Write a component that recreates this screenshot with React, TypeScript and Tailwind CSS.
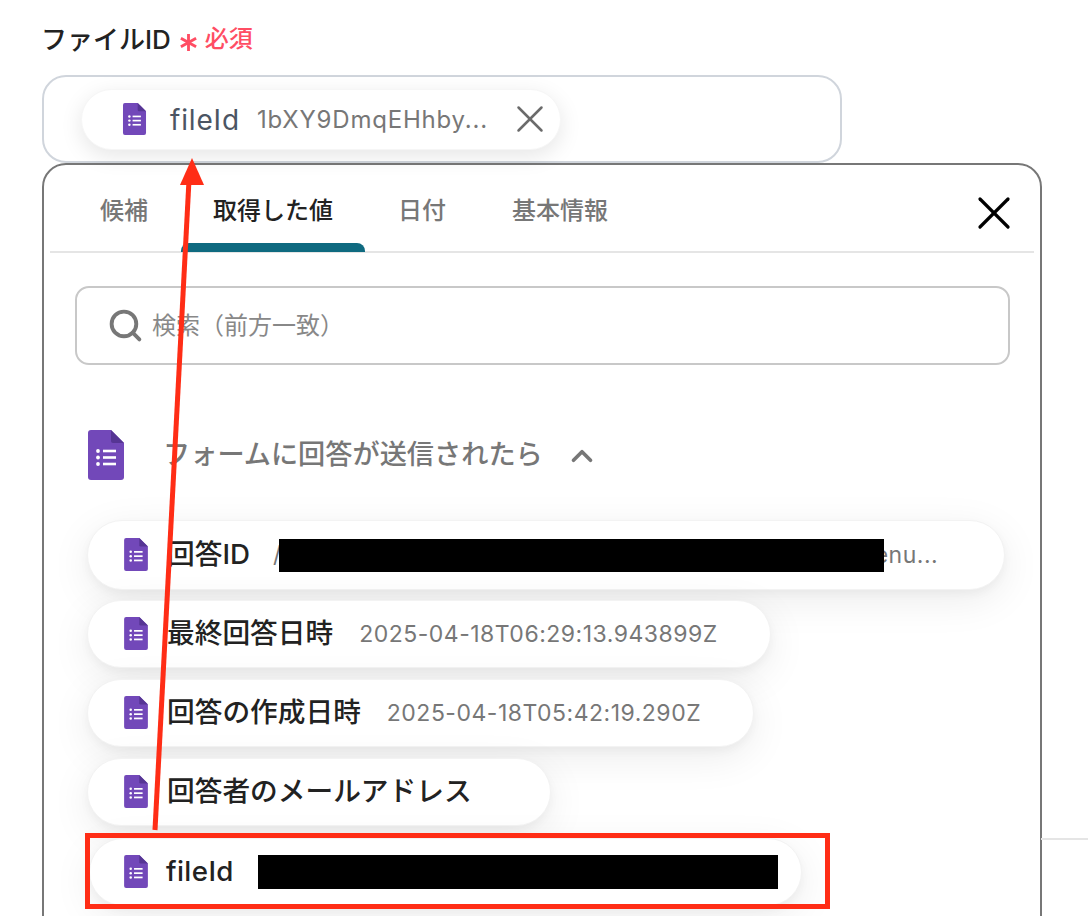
import React from "react";
import { Search, X, ChevronUp } from "lucide-react";

const FONT = '"Inter", "Noto Sans CJK JP", sans-serif';

const FormsIcon = ({ className }: { className: string }) => (
  <svg viewBox="0 0 36 50" className={className}>
    <path d="M3 0H23L36 13V47a3 3 0 0 1-3 3H3a3 3 0 0 1-3-3V3a3 3 0 0 1 3-3Z" fill="#7248b9" />
    <path d="M23 0L36 13H25a2 2 0 0 1-2-2Z" fill="#563594" />
    <circle cx="10" cy="21" r="1.9" fill="#fff" />
    <circle cx="10" cy="27.5" r="1.9" fill="#fff" />
    <circle cx="10" cy="34" r="1.9" fill="#fff" />
    <rect x="15" y="19.7" width="13" height="2.6" fill="#fff" />
    <rect x="15" y="26.2" width="13" height="2.6" fill="#fff" />
    <rect x="15" y="32.7" width="13" height="2.6" fill="#fff" />
  </svg>
);

const Row = ({
  className,
  iconClass = "ml-[36px]",
  children,
}: {
  className: string;
  iconClass?: string;
  children: React.ReactNode;
}) => (
  <div
    className={`flex shrink-0 items-center rounded-full border border-[#f3f3f3] bg-white shadow-[0_4px_10px_rgba(0,0,0,0.04),0_10px_40px_rgba(0,0,0,0.08)] ${className}`}
  >
    <FormsIcon className={`-mt-[2px] h-[33px] w-[24px] shrink-0 ${iconClass}`} />
    {children}
  </div>
);

const RowLabel = ({ text, className }: { text: string; className: string }) => (
  <span className={`whitespace-nowrap text-[27.7px] font-medium text-[#222] ${className}`}>{text}</span>
);

const RowValue = ({ text, className }: { text: string; className: string }) => (
  <span className={`whitespace-nowrap text-[23px] tracking-[0.5px] text-[#777] ${className}`}>{text}</span>
);

const tabs = ["候補", "取得した値", "日付", "基本情報"];

export default function App() {
  return (
    <div className="relative h-[916px] w-[1088px] overflow-hidden bg-white" style={{ fontFamily: FONT }}>
      {/* divider of the page behind the dialog */}
      <div className="absolute left-[1041px] top-[838px] h-[2px] w-[47px] bg-[#e5e5e5]" />

      {/* Label */}
      <div className="flex h-[75px] items-center pl-[41px] pt-[3px]">
        <span className="text-[26px] font-medium text-[#222]">ファイルID</span>
        <svg viewBox="0 0 20 20" className="ml-[8px] mt-[6px] h-[19px] w-[19px]" stroke="#ff4d63" strokeWidth="3">
          <path d="M10 1V19M2 5.5L18 14.5M18 5.5L2 14.5" />
        </svg>
        <span className="ml-[7px] text-[24px] font-medium text-[#ff4d63]">必須</span>
      </div>

      {/* Selected value */}
      <div className="ml-[42px] flex h-[88px] w-[800px] items-center rounded-[24px] border-2 border-[#d0d5dc] pl-[37px]">
        <div className="flex h-[61px] w-[480px] items-center rounded-full border border-[#f6f6f6] bg-white shadow-[0_6px_22px_rgba(0,0,0,0.1)]">
          <FormsIcon className="ml-[40px] h-[32px] w-[25px] shrink-0" />
          <span className="ml-[23px] pt-[2px] text-[28px] tracking-[0.03em] text-[#4b5563]">fileId</span>
          <span className="ml-[17px] whitespace-nowrap pt-[2px] text-[24px] tracking-[0.8px] text-[#777]">
            1bXY9DmqEHhby...
          </span>
          <X className="ml-[19px] h-[46px] w-[46px] shrink-0 text-[#6b6b6b]" strokeWidth={1.3} />
        </div>
      </div>

      {/* Dialog */}
      <div className="ml-[42px] h-[800px] w-[1000px] rounded-t-[24px] border-2 border-[#777] bg-white pl-[6px] pr-[6px]">
        <div className="flex h-[88px] w-[984px] items-start border-b-2 border-[#e5e5e5] pl-[17px]">
          {tabs.map((tab, i) => (
            <div key={tab} className="flex flex-col">
              <div
                className={`flex h-[78px] items-center pt-[14px] text-[24px] font-medium ${
                  i === 1 ? "px-[32px] text-[#222]" : "px-[33px] text-[#777]"
                }`}
              >
                {tab}
              </div>
              {i === 1 && <div className="h-[9px] rounded-t-[8px] bg-[#0f6a80]" />}
            </div>
          ))}
          <X className="ml-auto mr-[12px] mt-[20px] h-[56px] w-[56px] text-black" strokeWidth={1.4} />
        </div>

        {/* Search */}
        <div className="ml-[25px] mt-[33px] flex h-[79px] w-[935px] items-center rounded-[14px] border-2 border-[#c8c8c8] pl-[30px]">
          <Search className="h-[37px] w-[37px] text-[#777]" strokeWidth={2.5} />
          <span className="ml-[8px] text-[24px] text-[#888]">検索（前方一致）</span>
        </div>

        {/* Section */}
        <div className="ml-[38px] mt-[65px] flex h-[50px] items-center">
          <FormsIcon className="h-[50px] w-[36px]" />
          <span className="ml-[39px] pt-[1px] text-[27.2px] font-medium text-[#777]">フォームに回答が送信されたら</span>
          <ChevronUp className="ml-[22px] mt-[2px] h-[34px] w-[34px] text-[#777]" strokeWidth={2.6} />
        </div>

        {/* Rows */}
        <div className="ml-[37px] mt-[40px] flex flex-col gap-[11px]">
          <Row className="-mb-[1px] h-[70px] w-[918px]">
            <RowLabel text="回答ID" className="ml-[19px]" />
            <RowValue text="/" className="ml-[23px]" />
            <div className="relative z-10 -ml-[3px] h-[33px] w-[605px] shrink-0 bg-black" />
            <RowValue text="enu..." className="-ml-[9px]" />
          </Row>
          <Row className="h-[68px] w-[684px]">
            <RowLabel text="最終回答日時" className="ml-[19px]" />
            <RowValue text="2025-04-18T06:29:13.943899Z" className="ml-[26px]" />
          </Row>
          <Row className="h-[68px] w-[667px]">
            <RowLabel text="回答の作成日時" className="ml-[19px]" />
            <RowValue text="2025-04-18T05:42:19.290Z" className="ml-[26px]" />
          </Row>
          <Row className="h-[68px] w-[464px]">
            <RowLabel text="回答者のメールアドレス" className="ml-[19px]" />
          </Row>
          <Row className="ml-[2px] mt-[1px] h-[68px] w-[713px]" iconClass="ml-[34px]">
            <RowLabel text="fileId" className="ml-[18px] tracking-[0.4px]" />
            <div className="ml-[24px] h-[34px] w-[520px] shrink-0 bg-black" />
          </Row>
        </div>
      </div>

      {/* Annotations */}
      <div className="absolute left-[85px] top-[833px] h-[76px] w-[745px] border-[5px] border-[#ff2d16]" />
      <svg className="absolute left-0 top-0 h-[916px] w-[1088px]" viewBox="0 0 1088 916" fill="none">
        <path d="M155 830L189 180" stroke="#ff2d16" strokeWidth="5" />
        <path d="M192 158L204 185H180Z" fill="#ff2d16" />
      </svg>
    </div>
  );
}
